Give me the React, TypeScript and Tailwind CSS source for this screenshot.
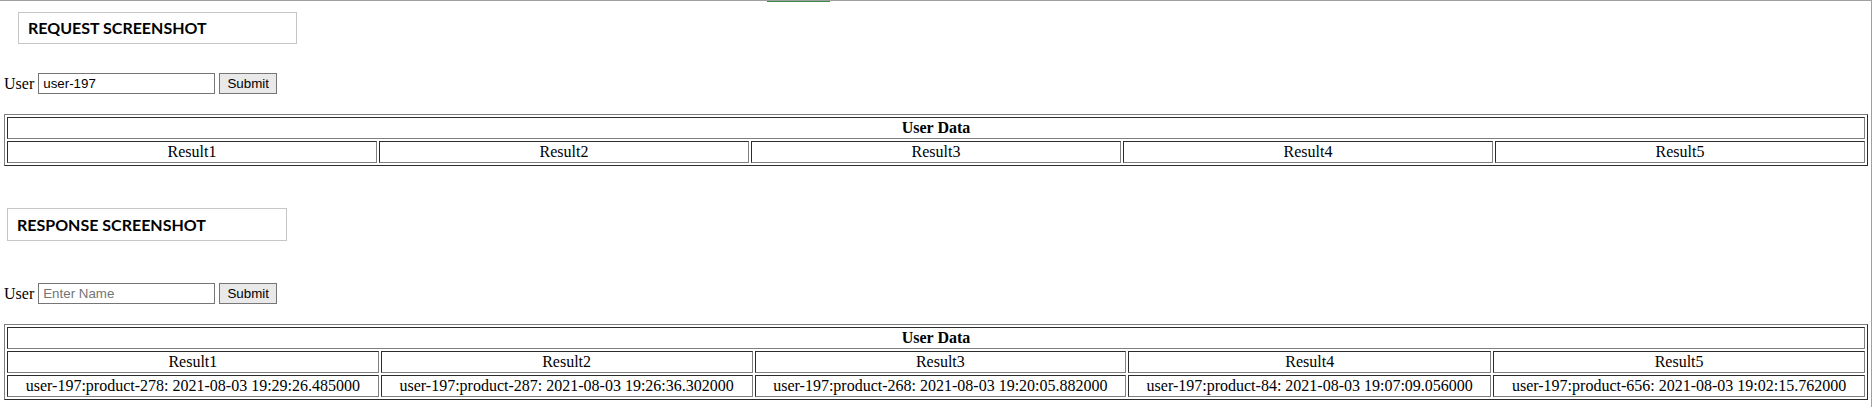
import React from "react";

const serif = "font-['Liberation_Serif','Times_New_Roman',serif]";
const arial = "font-['Liberation_Sans',Arial,sans-serif]";

function Heading({ text, className }: { text: string; className: string }) {
  return (
    <div
      className={`flex items-center border border-[#c6c6c6] pl-[9px] font-['Lato',sans-serif] text-[16px] font-bold text-black ${className}`}
    >
      {text}
    </div>
  );
}

function UserRow({ value, className }: { value?: string; className: string }) {
  return (
    <div className={`flex items-center pl-[4px] ${className}`}>
      <span className={`${serif} text-[16px] leading-[18px] text-black`}>User</span>
      <input
        readOnly
        defaultValue={value}
        placeholder="Enter Name"
        className={`ml-[4px] box-border h-[21px] w-[177px] border border-[#767676] bg-white px-[4px] ${arial} text-[13.33px] text-black outline-none placeholder:text-[#757575]`}
      />
      <button
        className={`ml-[4px] box-border h-[21px] w-[58px] border border-[#767676] bg-[#e9e9e9] ${arial} text-[13.33px] leading-none text-black`}
      >
        Submit
      </button>
    </div>
  );
}

const cell =
  "border border-[gray] [border-style:inset] p-[1px] text-center font-normal leading-[18px]";

function DataTable({ rows, className }: { rows?: string[]; className: string }) {
  return (
    <table
      className={`${serif} w-[1864px] border-separate border-spacing-[2px] border border-[gray] [border-style:outset] text-[16px] text-black ${className}`}
    >
      <tbody>
        <tr>
          <th colSpan={5} className={`${cell} font-bold`}>
            <b>User Data</b>
          </th>
        </tr>
        <tr>
          {["Result1", "Result2", "Result3", "Result4", "Result5"].map((r) => (
            <td key={r} className={cell}>
              {r}
            </td>
          ))}
        </tr>
        {rows && (
          <tr>
            {rows.map((r) => (
              <td key={r} className={`${cell} whitespace-nowrap`}>
                {r}
              </td>
            ))}
          </tr>
        )}
      </tbody>
    </table>
  );
}

export default function App() {
  const results = [
    "user-197:product-278: 2021-08-03 19:29:26.485000",
    "user-197:product-287: 2021-08-03 19:26:36.302000",
    "user-197:product-268: 2021-08-03 19:20:05.882000",
    "user-197:product-84: 2021-08-03 19:07:09.056000",
    "user-197:product-656: 2021-08-03 19:02:15.762000",
  ];
  return (
    <div className="relative box-border h-[407px] w-[1872px] overflow-hidden border-t border-r border-[#a0a0a0] bg-white">
      <div className="absolute left-[767px] top-[-1px] h-[2px] w-[63px] bg-[#3b8a4b]" />
      <Heading text="REQUEST SCREENSHOT" className="ml-[18px] mt-[11px] h-[32px] w-[279px]" />
      <UserRow value="user-197" className="mt-[29px]" />
      <DataTable className="ml-[4px] mt-[20px]" />
      <Heading text="RESPONSE SCREENSHOT" className="ml-[7px] mt-[42px] h-[33px] w-[280px]" />
      <UserRow className="mt-[42px]" />
      <DataTable rows={results} className="ml-[4px] mt-[20px]" />
    </div>
  );
}
